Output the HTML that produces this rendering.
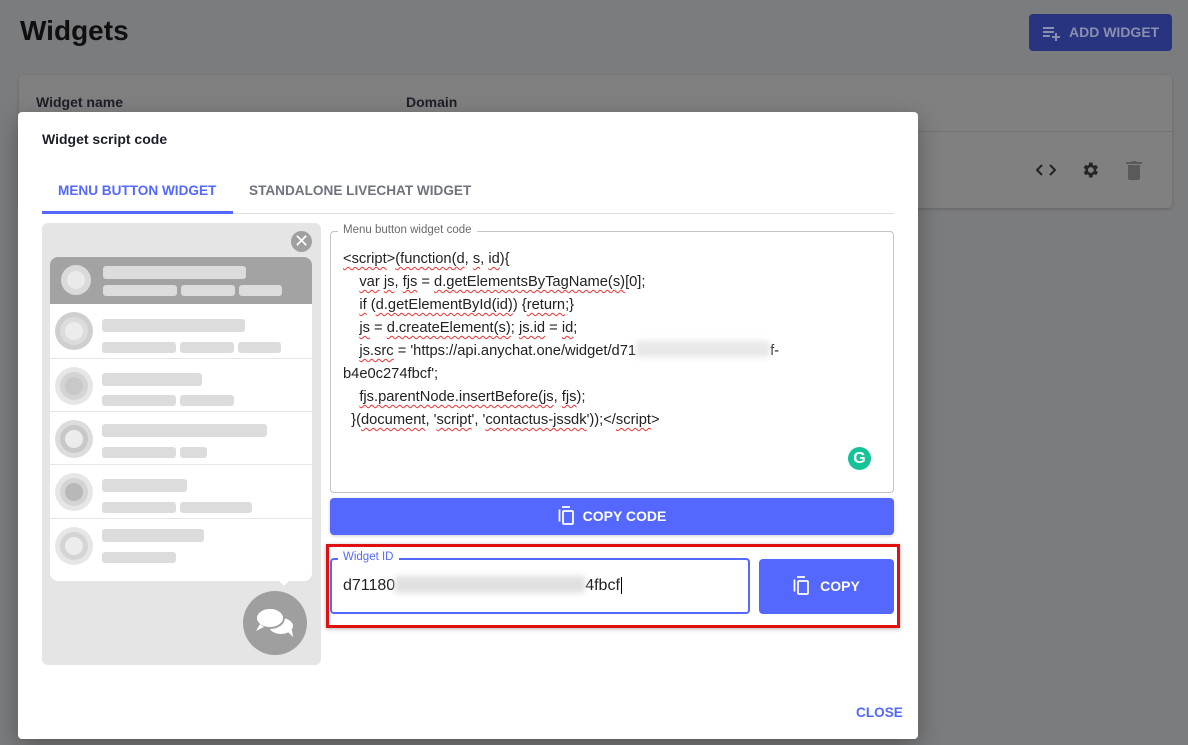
<!DOCTYPE html>
<html><head><style>
*{box-sizing:border-box;margin:0;padding:0}
body{width:1188px;height:745px;overflow:hidden;background:#7b7c7e;font-family:"Liberation Sans",Roboto,sans-serif;position:relative}
.abs{position:absolute}
.bar{position:absolute;background:#dcdcdc;border-radius:3px;height:13px}
.row{position:absolute;left:20px;width:262px;height:53px;border-top:1px solid #e6e6e6}
.av{position:absolute;left:5px;top:8px;width:38px;height:38px;border-radius:50%;background:#e6e6e6}
.av i{position:absolute;left:5px;top:5px;width:28px;height:28px;border-radius:50%;background:#d4d4d4}
.av b{position:absolute;left:10px;top:10px;width:18px;height:18px;border-radius:50%;background:#ececec}
.code{position:absolute;left:343px;font-size:14.7px;color:#222;line-height:23px;white-space:pre}
u{text-decoration:underline wavy #e33;text-decoration-thickness:1px;text-underline-offset:3px}
</style></head><body>
<div class="abs" style="left:20px;top:15px;font-size:28px;color:#0f0f10;font-weight:bold">Widgets</div>
<div class="abs" style="left:1029px;top:14px;width:143px;height:37px;background:#28347f;border-radius:4px;color:#8a8fb0;font-size:14px;font-weight:bold;line-height:37px;padding-left:40px">ADD WIDGET
<svg class="abs" style="left:12px;top:10px" width="20" height="18" viewBox="0 0 20 18"><path d="M2 4h11M2 8h11M2 12h7M11 13h8M15 9v8" stroke="#8a8fb0" stroke-width="2"/></svg></div>
<div class="abs" style="left:19px;top:75px;width:1153px;height:133px;background:#808080;border-radius:4px;box-shadow:0 1px 3px rgba(0,0,0,.2)"></div>
<div class="abs" style="left:19px;top:131px;width:1153px;height:1px;background:#727272"></div>
<div class="abs" style="left:36px;top:94px;font-size:14px;font-weight:bold;color:#1c1f28">Widget name</div>
<div class="abs" style="left:406px;top:94px;font-size:14px;font-weight:bold;color:#1c1f28">Domain</div>
<svg class="abs" style="left:1036px;top:162px" width="20" height="16" viewBox="0 0 20 16"><path d="M6 3L1 8l5 5M14 3l5 5-5 5" stroke="#222" stroke-width="2" fill="none"/></svg>
<svg class="abs" style="left:1080px;top:160px" width="20" height="20" viewBox="0 0 24 24"><path fill="#262626" d="M19.4 13a7.5 7.5 0 0 0 0-2l2.1-1.6-2-3.5-2.5 1a7 7 0 0 0-1.7-1L15 3h-4l-.4 2.9a7 7 0 0 0-1.7 1l-2.5-1-2 3.5L6.5 11a7.5 7.5 0 0 0 0 2l-2.1 1.6 2 3.5 2.5-1a7 7 0 0 0 1.7 1L11 21h4l.4-2.9a7 7 0 0 0 1.7-1l2.5 1 2-3.5zM13 15.5a3.5 3.5 0 1 1 0-7 3.5 3.5 0 0 1 0 7z"/></svg>
<svg class="abs" style="left:1126px;top:160px" width="16" height="20" viewBox="0 0 16 20"><path fill="#5a5a5a" d="M2 5h12v13a2 2 0 0 1-2 2H4a2 2 0 0 1-2-2zM0 2h5l1-1h4l1 1h5v2H0z"/></svg>

<div class="abs" style="left:18px;top:112px;width:900px;height:627px;background:#fff;border-radius:4px;box-shadow:0 8px 24px rgba(0,0,0,.3)"></div>
<div class="abs" style="left:42px;top:131px;font-size:14px;font-weight:bold;color:#1c1f28">Widget script code</div>
<div class="abs" style="left:58px;top:183px;font-size:13.6px;font-weight:bold;color:#5468ff">MENU BUTTON WIDGET</div>
<div class="abs" style="left:249px;top:183px;font-size:13.6px;font-weight:bold;color:#6f737c">STANDALONE LIVECHAT WIDGET</div>
<div class="abs" style="left:42px;top:213px;width:852px;height:1px;background:#e0e0e0"></div>
<div class="abs" style="left:42px;top:211px;width:191px;height:3px;background:#5468ff"></div>

<div class="abs" style="left:42px;top:223px;width:279px;height:442px;background:#e5e5e5;border-radius:6px">
 <div class="abs" style="left:249px;top:8px;width:21px;height:21px;border-radius:50%;background:#a0a0a0;color:#fff;font-size:18px;line-height:20px;text-align:center">✕</div>
 <div class="abs" style="left:8px;top:34px;width:262px;height:324px;background:#fff;border-radius:8px;overflow:hidden">
  <div class="abs" style="left:0;top:0;width:262px;height:47px;background:#a3a3a3"></div>
  <div class="abs" style="left:11px;top:8px;width:30px;height:30px;border-radius:50%;background:#dadada"><div class="abs" style="left:6px;top:6px;width:18px;height:18px;border-radius:50%;background:#eaeaea"></div></div>
  <div class="bar" style="left:53px;top:9px;width:143px;background:#dcdcdc"></div>
  <div class="bar" style="left:53px;top:28px;width:74px;height:11px"></div>
  <div class="bar" style="left:131px;top:28px;width:54px;height:11px"></div>
  <div class="bar" style="left:189px;top:28px;width:43px;height:11px"></div>
 </div>
 <div class="row" style="left:8px;top:81px;border:0"><div class="av" style="background:#cfcfcf"><i style="background:#dcdcdc"></i><b></b></div><div class="bar" style="left:52px;top:15px;width:143px"></div><div class="bar" style="left:52px;top:38px;width:74px;height:11px"></div><div class="bar" style="left:130px;top:38px;width:54px;height:11px"></div><div class="bar" style="left:188px;top:38px;width:43px;height:11px"></div></div>
 <div class="row" style="left:8px;top:135px"><div class="av"><i></i><b style="background:#c8c8c8"></b></div><div class="bar" style="left:52px;top:14px;width:100px"></div><div class="bar" style="left:52px;top:36px;width:74px;height:11px"></div><div class="bar" style="left:130px;top:36px;width:54px;height:11px"></div></div>
 <div class="row" style="left:8px;top:188px"><div class="av" style="background:#dcdcdc"><i style="background:#c8c8c8"></i><b></b></div><div class="bar" style="left:52px;top:12px;width:165px"></div><div class="bar" style="left:52px;top:35px;width:74px;height:11px"></div><div class="bar" style="left:130px;top:35px;width:27px;height:11px"></div></div>
 <div class="row" style="left:8px;top:241px"><div class="av"><i></i><b style="background:#b8b8b8"></b></div><div class="bar" style="left:52px;top:14px;width:85px"></div><div class="bar" style="left:52px;top:37px;width:74px;height:11px"></div><div class="bar" style="left:130px;top:37px;width:72px;height:11px"></div></div>
 <div class="row" style="left:8px;top:295px"><div class="av"><i></i><b></b></div><div class="bar" style="left:52px;top:10px;width:102px"></div><div class="bar" style="left:52px;top:33px;width:74px;height:11px"></div></div>
 <div class="abs" style="left:236px;top:357px;width:0;height:0;border-left:6px solid transparent;border-right:6px solid transparent;border-top:6px solid #fff"></div>
 <div class="abs" style="left:201px;top:368px;width:64px;height:64px;border-radius:50%;background:#9f9f9f">
  <svg class="abs" style="left:11px;top:14px" width="44" height="36" viewBox="0 0 44 36"><ellipse cx="27" cy="21" rx="13" ry="9" fill="#fff" stroke="#9f9f9f" stroke-width="2"/><path d="M34 27l5 5-1-7z" fill="#fff"/><ellipse cx="16" cy="13" rx="14" ry="10" fill="#fff" stroke="#9f9f9f" stroke-width="2"/><path d="M6 19l-4 7 8-4z" fill="#fff"/></svg>
 </div>
</div>

<div class="abs" style="left:330px;top:231px;width:564px;height:262px;border:1px solid #c4c4c4;border-radius:4px"></div>
<div class="abs" style="left:338px;top:224px;background:#fff;padding:0 5px;font-size:11.5px;color:#6b6b6b">Menu button widget code</div>
<div class="code" style="top:248px"><u>&lt;script</u>&gt;<u>(function(d</u>, <u>s</u>, <u>id</u>){</div>
<div class="code" style="top:271px">    <u>var</u> <u>js</u>, <u>fjs</u> = <u>d.getElementsByTagName(s)</u>[0];</div>
<div class="code" style="top:294px">    <u>if</u> (<u>d.getElementById(id)</u>) {<u>return</u>;}</div>
<div class="code" style="top:317px">    <u>js</u> = <u>d.createElement(s)</u>; <u>js.id</u> = <u>id</u>;</div>
<div class="code" style="top:340px">    <u>js.src</u> = 'https://api.anychat.one/widget/d71<span style="display:inline-block;width:134px;height:16px;vertical-align:-2px;background:#e8e8e8;filter:blur(3px)"></span>f-</div>
<div class="code" style="top:363px">b4e0c274fbcf';</div>
<div class="code" style="top:386px">    <u>fjs.parentNode.insertBefore(js</u>, <u>fjs</u>);</div>
<div class="code" style="top:409px">  }(<u>document</u>, '<u>script</u>', '<u>contactus-jssdk</u>'));&lt;/<u>script</u>&gt;</div>
<div class="abs" style="left:848px;top:447px;width:23px;height:23px;border-radius:50%;background:#15c39a;color:#fff;font-weight:bold;font-size:16px;line-height:23px;text-align:center">G</div>

<div class="abs" style="left:330px;top:498px;width:564px;height:37px;background:#5468ff;border-radius:4px;color:#fff;font-size:14px;font-weight:bold;line-height:37px;text-align:center;box-shadow:0 1px 3px rgba(0,0,0,.2)"><svg style="vertical-align:-4px;margin-right:8px" width="17" height="19" viewBox="0 0 17 19"><path d="M4 1h8M1.5 3.5v12" stroke="#fff" stroke-width="1.8" fill="none"/><rect x="5" y="5" width="10" height="13" rx="1" stroke="#fff" stroke-width="1.8" fill="none"/></svg>COPY CODE</div>

<div class="abs" style="left:326px;top:544px;width:574px;height:84px;border:3px solid #e01010;box-shadow:0 1px 4px rgba(0,0,0,.3)"></div>
<div class="abs" style="left:330px;top:558px;width:420px;height:56px;border:2px solid #5468ff;border-radius:4px"></div>
<div class="abs" style="left:338px;top:551px;background:#fff;padding:0 5px;font-size:11.5px;color:#5468ff">Widget ID</div>
<div class="abs" style="left:343px;top:576px;font-size:16px;color:#222">d71180<span style="display:inline-block;width:190px;height:17px;vertical-align:-3px;background:#e0e0e0;filter:blur(3px)"></span>4fbcf<span style="border-left:1px solid #000;margin-left:1px"></span></div>
<div class="abs" style="left:759px;top:559px;width:135px;height:55px;background:#5468ff;border-radius:4px;color:#fff;font-size:14px;font-weight:bold;line-height:55px;text-align:center"><svg style="vertical-align:-4px;margin-right:10px" width="17" height="19" viewBox="0 0 17 19"><path d="M4 1h8M1.5 3.5v12" stroke="#fff" stroke-width="1.8" fill="none"/><rect x="5" y="5" width="10" height="13" rx="1" stroke="#fff" stroke-width="1.8" fill="none"/></svg>COPY</div>

<div class="abs" style="left:856px;top:705px;font-size:13.6px;font-weight:bold;color:#5468ff">CLOSE</div>
</body></html>
